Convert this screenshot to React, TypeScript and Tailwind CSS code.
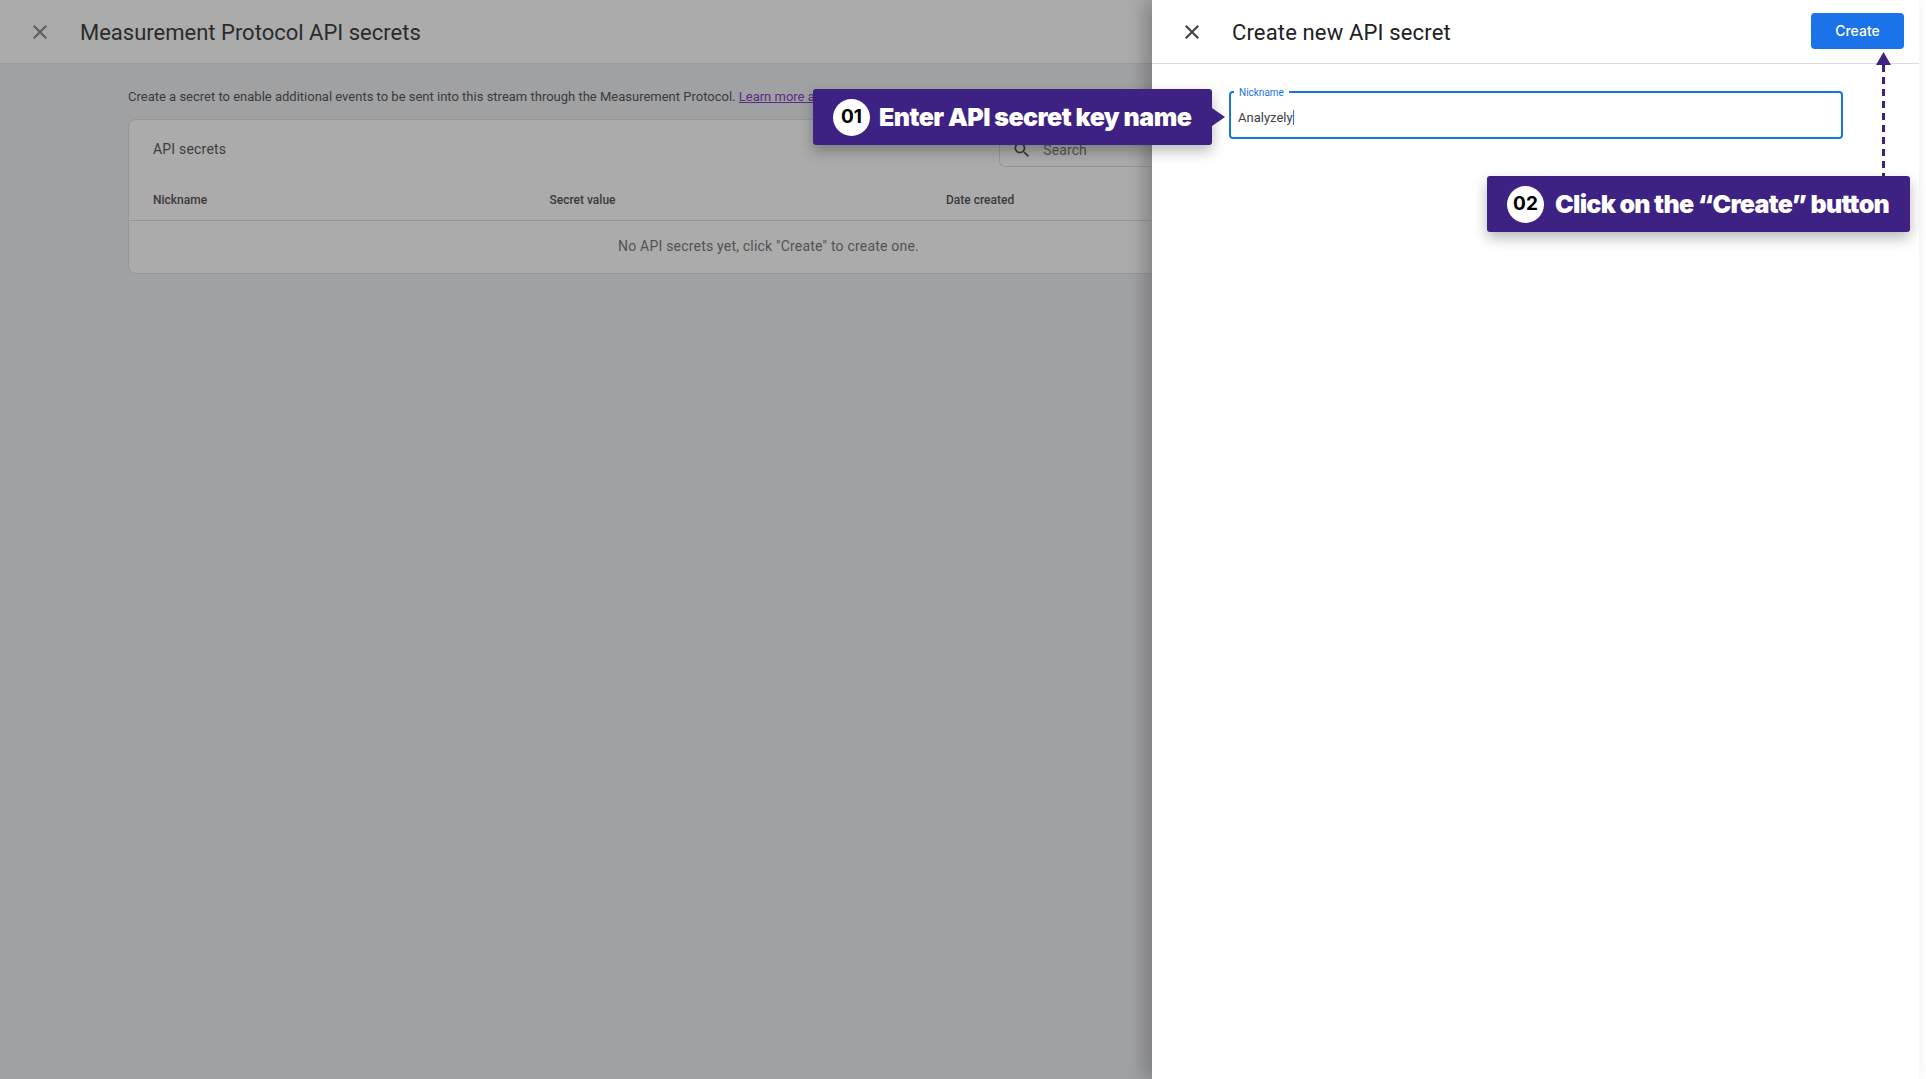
const closePath = "M19 6.41L17.59 5 12 10.59 6.41 5 5 6.41 10.59 12 5 17.59 6.41 19 12 13.41 17.59 19 19 17.59 13.41 12z";
const searchPath = "M15.5 14h-.79l-.28-.27C15.41 12.59 16 11.11 16 9.5 16 5.91 13.09 3 9.5 3S3 5.91 3 9.5 5.91 16 9.5 16c1.61 0 3.09-.59 4.23-1.57l.27.28v.79l5 4.99L20.49 19l-4.99-5zm-6 0C7.01 14 5 11.99 5 9.5S7.01 5 9.5 5 14 7.01 14 9.5 11.99 14 9.5 14z";

function Icon({ d, className }: { d: string; className: string }) {
  return (
    <svg viewBox="0 0 24 24" className={className} fill="currentColor">
      <path d={d} />
    </svg>
  );
}

function Callout({ num, text, className, textClass }: { num: string; text: string; className: string; textClass: string }) {
  return (
    <div className={"absolute z-30 flex h-[56px] items-center rounded-[3px] bg-[#3d2183] pl-[20px] font-['Inter',sans-serif] shadow-[0_6px_14px_rgba(0,0,0,0.28)] " + className}>
      <div className="flex h-[37px] w-[37px] items-center justify-center rounded-full bg-white text-[19px] font-bold text-black">{num}</div>
      <span className={"mt-[1px] whitespace-nowrap text-[25px] font-black text-white " + textClass}>{text}</span>
    </div>
  );
}

export default function App() {
  return (
    <div className="relative h-[1079px] w-[1926px] overflow-hidden bg-white font-['Roboto',sans-serif]">
      <div className="flex h-full w-[1919px]">
        {/* Dimmed page */}
        <div className="h-full w-[1152px] shrink-0 overflow-hidden bg-[#a0a1a3]">
          <div className="flex h-[64px] w-[1919px] items-center border-b border-[#9a9a9a] bg-[#ababab] pl-[28px]">
            <Icon d={closePath} className="h-[24px] w-[24px] text-[#5f6060]" />
            <span className="ml-[28px] mt-[1px] text-[22px] text-[#2b2b2c]">Measurement Protocol API secrets</span>
          </div>
          <div className="w-[1919px] pl-[128px] pr-[128px] pt-[24px]">
            <p className="h-[18px] text-[13px] leading-[18px] text-[#3a3a3b]">
              Create a secret to enable additional events to be sent into this stream through the Measurement Protocol.{" "}
              <span className="text-[#5b2a86] underline">Learn more about API secrets</span>
            </p>
            <div className="mt-[13px] h-[155px] w-[1663px] rounded-[8px] border border-[#959697] bg-[#ababab]">
              <div className="flex h-[60px] items-center pl-[24px]">
                <span className="mb-[1px] text-[14px] tracking-[0.2px] text-[#3d3d3e]">API secrets</span>
                <div className="ml-[773px] mt-[1px] flex h-[32px] w-[400px] items-center rounded-bl-[6px] border-b border-l border-[#959697] pl-[12px]">
                  <Icon d={searchPath} className="h-[20px] w-[20px] text-[#3a3a3b]" />
                  <span className="ml-[11px] text-[14px] tracking-[0.1px] text-[#555556]">Search</span>
                </div>
              </div>
              <div className="grid h-[41px] grid-cols-[396.5px_396.5px_1fr] items-center border-b border-[#959697] pl-[24px] text-[12px] font-medium text-[#3a3a3b]">
                <span>Nickname</span>
                <span>Secret value</span>
                <span>Date created</span>
              </div>
              <div className="flex h-[51px] w-[1279px] items-center justify-center text-[14px] tracking-[0.2px] text-[#525253]">
                No API secrets yet, click "Create" to create one.
              </div>
            </div>
          </div>
        </div>

        {/* Side panel */}
        <div className="relative z-10 h-full flex-1 bg-white shadow-[-8px_0_16px_rgba(0,0,0,0.22)]">
          <div className="flex h-[64px] items-center border-b border-[#dadce0] pl-[28px]">
            <Icon d={closePath} className="h-[24px] w-[24px] text-[#3c4043]" />
            <span className="ml-[28px] mt-[1px] text-[22px] tracking-[0.15px] text-[#202124]">Create new API secret</span>
            <button className="ml-auto mr-[15px] mt-[-1px] flex h-[36px] w-[93px] items-center justify-center rounded-[4px] bg-[#1a73e8] pb-[2px] font-['Inter',sans-serif] text-[14px] font-medium text-white">
              Create
            </button>
          </div>
          <div className="relative ml-[77px] mt-[27px] flex h-[48px] w-[614px] items-center rounded-[4px] border-2 border-[#1a73e8] pl-[7px]">
            <span className="absolute left-[3px] top-[-6px] bg-white pl-[5px] pr-[5px] text-[10px] leading-[12px] text-[#1a73e8]">Nickname</span>
            <span className="mt-[4px] border-r border-[#1a73e8] text-[13px] leading-[15px] text-[#3c4043]">Analyzely</span>
          </div>
        </div>
      </div>

      {/* Callouts */}
      <Callout num="01" text="Enter API secret key name" textClass="ml-[9px] tracking-[-0.55px]" className="left-[813px] top-[89px] w-[399px]" />
      <div className="absolute left-[1212px] top-[108px] z-30 h-0 w-0 border-y-[9px] border-l-[13px] border-y-transparent border-l-[#3d2183]" />

      <Callout num="02" text="Click on the “Create” button" textClass="ml-[11px] tracking-[-0.72px]" className="left-[1487px] top-[176px] w-[423px]" />
      <svg className="absolute left-[1876px] top-[52px] z-20 h-[124px] w-[15px]" viewBox="0 0 15 124">
        <polygon points="7.5,0 15,13 0,13" fill="#3d2183" />
        <line x1="7.5" y1="13" x2="7.5" y2="124" stroke="#3d2183" strokeWidth="3" strokeDasharray="7 5" />
      </svg>
    </div>
  );
}
